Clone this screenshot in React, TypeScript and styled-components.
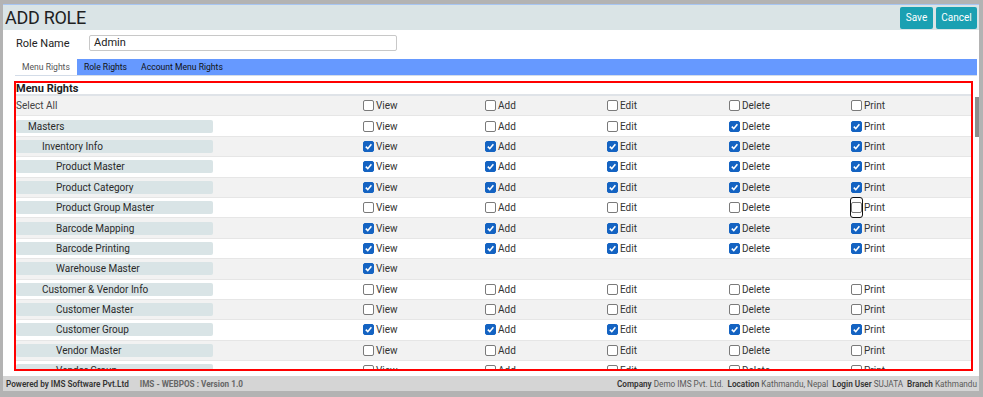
import styled, { createGlobalStyle } from 'styled-components';

const GlobalStyle = createGlobalStyle`
  html, body {
    margin: 0;
    padding: 0;
    background: #b3b3b3;
    font-family: Roboto, 'Liberation Sans', sans-serif;
  }
  * {
    box-sizing: border-box;
  }
`;

const Frame = styled.div`
  width: 983px;
  height: 397px;
  padding: 4px 4px 0 3px;
  overflow: hidden;
`;

const Panel = styled.div`
  width: 976px;
  height: 387px;
  display: flex;
  flex-direction: column;
  background: #ffffff;
`;

const Header = styled.header`
  height: 26px;
  display: flex;
  align-items: center;
  justify-content: space-between;
  padding: 0 2px 0 2px;
  background: #dae4e6;
  border-top: 1px solid #a7c5f2;
`;

const Title = styled.h1`
  margin: 0;
  font-size: 18px;
  font-weight: 400;
  color: #1f1f1f;
  letter-spacing: -0.3px;
`;

const Actions = styled.div`
  display: flex;
  gap: 3px;
`;

const Button = styled.button<{ $w: number }>`
  width: ${(p) => p.$w}px;
  height: 22px;
  padding: 0;
  border: none;
  border-radius: 2px;
  background: #1aa0b2;
  color: #ffffff;
  font-family: Roboto, 'Liberation Sans', sans-serif;
  font-size: 10px;
`;

const Body = styled.div`
  flex: 1;
  display: flex;
  flex-direction: column;
  padding: 5px 0 5px 11px;
  min-height: 0;
`;

const RoleRow = styled.div`
  display: flex;
  align-items: center;
  height: 16px;
  padding-left: 2px;
`;

const Label = styled.label`
  width: 73px;
  font-size: 11px;
  color: #222;
`;

const Input = styled.div`
  width: 308px;
  height: 16px;
  border: 1px solid #c8c8c8;
  border-radius: 2px;
  padding: 0 4px;
  font-size: 11px;
  line-height: 14px;
  color: #222;
`;

const TabBar = styled.div`
  display: flex;
  margin: 8px 2px 0 1px;
  height: 17px;
  border-bottom: 1px solid #d3dce8;
`;

const TabStrip = styled.div`
  flex: 1;
  display: flex;
  background: #6699ff;
  padding-left: 7px;
  gap: 14px;
`;

const Tab = styled.span<{ $active?: boolean }>`
  display: flex;
  align-items: center;
  font-size: 8.6px;
  color: ${(p) => (p.$active ? '#555' : '#111')};
  background: ${(p) => (p.$active ? '#ffffff' : 'transparent')};
  padding: ${(p) => (p.$active ? '0 7px' : '0')};
`;

const RightsRow = styled.div`
  flex: 1;
  display: flex;
  gap: 2px;
  margin-top: 5px;
  min-height: 0;
`;

const RightsBox = styled.div`
  width: 959px;
  border: 2px solid #ff0000;
  overflow: hidden;
`;

const ScrollBar = styled.div`
  width: 4px;
  padding-top: 16px;
`;

const Thumb = styled.div`
  height: 40px;
  background: #8c8c8c;
`;

const SectionTitle = styled.div`
  height: 13px;
  display: flex;
  align-items: center;
  font-size: 11px;
  font-weight: 700;
  color: #222;
  border-bottom: 2px solid #dfe3e8;
`;

const Row = styled.div<{ $shade: boolean }>`
  display: grid;
  grid-template-columns: 347px repeat(4, 122px) 1fr;
  align-items: center;
  height: 20.4px;
  background: ${(p) => (p.$shade ? '#f2f2f2' : '#ffffff')};
  border-bottom: 1px solid #e6e6e6;
`;

const SelectAll = styled.span`
  font-size: 10px;
  color: #444;
`;

const NamePill = styled.span<{ $level: number }>`
  width: 197px;
  height: 13px;
  display: flex;
  align-items: center;
  padding-left: ${(p) => 12 + p.$level * 14}px;
  background: #d9e4e6;
  border-radius: 2px;
  font-size: 10px;
  color: #2a2a2a;
`;

const Check = styled.span`
  display: flex;
  align-items: center;
  gap: 2px;
  font-size: 10px;
  color: #333;
`;

const Box = styled.span<{ $checked: boolean }>`
  width: 11px;
  height: 11px;
  display: inline-flex;
  align-items: center;
  justify-content: center;
  border-radius: 2px;
  border: 1px solid ${(p) => (p.$checked ? '#1463c2' : '#7a7a7a')};
  background: ${(p) => (p.$checked ? '#1463c2' : '#ffffff')};
`;

const FocusRing = styled.span`
  display: inline-flex;
  padding: 4px 0;
  margin: -5px -1px;
  border: 1.5px solid #111;
  border-radius: 3px;
`;

const Footer = styled.footer`
  height: 15px;
  display: flex;
  align-items: center;
  justify-content: space-between;
  padding: 0 2px 0 3px;
  background: #d5d5d5;
  font-size: 8.2px;
  color: #5a5a5a;
`;

const FooterLeft = styled.div`
  display: flex;
  gap: 11px;
`;

const Strong = styled.b<{ $dark?: boolean }>`
  font-weight: ${(p) => (p.$dark ? 600 : 700)};
  color: ${(p) => (p.$dark ? '#333' : '#666')};
`;

const Meta = styled.div`
  display: flex;
  gap: 4px;
`;

type Perm = boolean | null;

interface MenuRow {
  name: string;
  level: number;
  perms: Perm[];
  focus?: number;
}

const all = (v: boolean): Perm[] => [v, v, v, v, v];

const rows: MenuRow[] = [
  { name: 'Masters', level: 0, perms: [false, false, false, true, true] },
  { name: 'Inventory Info', level: 1, perms: all(true) },
  { name: 'Product Master', level: 2, perms: all(true) },
  { name: 'Product Category', level: 2, perms: all(true) },
  { name: 'Product Group Master', level: 2, perms: all(false), focus: 4 },
  { name: 'Barcode Mapping', level: 2, perms: all(true) },
  { name: 'Barcode Printing', level: 2, perms: all(true) },
  { name: 'Warehouse Master', level: 2, perms: [true, null, null, null, null] },
  { name: 'Customer & Vendor Info', level: 1, perms: all(false) },
  { name: 'Customer Master', level: 2, perms: all(false) },
  { name: 'Customer Group', level: 2, perms: all(true) },
  { name: 'Vendor Master', level: 2, perms: all(false) },
  { name: 'Vendor Group', level: 2, perms: all(false) },
];

const labels = ['View', 'Add', 'Edit', 'Delete', 'Print'];

function Tick() {
  return (
    <svg width='9' height='9' viewBox='0 0 10 10'>
      <path d='M2 5.2 L4.2 7.4 L8.2 2.6' fill='none' stroke='#fff' strokeWidth='1.8' />
    </svg>
  );
}

function CheckItem({ label, checked, focus }: { label: string; checked: boolean; focus?: boolean }) {
  const box = <Box $checked={checked}>{checked && <Tick />}</Box>;
  return (
    <Check>
      {focus ? <FocusRing>{box}</FocusRing> : box}
      {label}
    </Check>
  );
}

function App() {
  return (
    <Frame>
      <GlobalStyle />
      <Panel>
        <Header>
          <Title>ADD ROLE</Title>
          <Actions>
            <Button $w={33}>Save</Button>
            <Button $w={41}>Cancel</Button>
          </Actions>
        </Header>
        <Body>
          <RoleRow>
            <Label>Role Name</Label>
            <Input>Admin</Input>
          </RoleRow>
          <TabBar>
            <Tab $active>Menu Rights</Tab>
            <TabStrip>
              <Tab>Role Rights</Tab>
              <Tab>Account Menu Rights</Tab>
            </TabStrip>
          </TabBar>
          <RightsRow>
            <RightsBox>
              <SectionTitle>Menu Rights</SectionTitle>
              <Row $shade>
                <SelectAll>Select All</SelectAll>
                {labels.map((l) => (
                  <CheckItem key={l} label={l} checked={false} />
                ))}
              </Row>
              {rows.map((r, i) => (
                <Row key={r.name} $shade={i % 2 === 1}>
                  <NamePill $level={r.level}>{r.name}</NamePill>
                  {r.perms.map((p, j) =>
                    p === null ? (
                      <span key={j} />
                    ) : (
                      <CheckItem key={j} label={labels[j]} checked={p} focus={r.focus === j} />
                    )
                  )}
                </Row>
              ))}
            </RightsBox>
            <ScrollBar>
              <Thumb />
            </ScrollBar>
          </RightsRow>
        </Body>
        <Footer>
          <FooterLeft>
            <Strong $dark>Powered by IMS Software Pvt.Ltd</Strong>
            <Strong>IMS - WEBPOS : Version 1.0</Strong>
          </FooterLeft>
          <Meta>
            <span>
              <Strong $dark>Company</Strong> Demo IMS Pvt. Ltd.
            </span>
            <span>
              <Strong $dark>Location</Strong> Kathmandu, Nepal
            </span>
            <span>
              <Strong $dark>Login User</Strong> SUJATA
            </span>
            <span>
              <Strong $dark>Branch</Strong> Kathmandu
            </span>
          </Meta>
        </Footer>
      </Panel>
    </Frame>
  );
}

export default App;
